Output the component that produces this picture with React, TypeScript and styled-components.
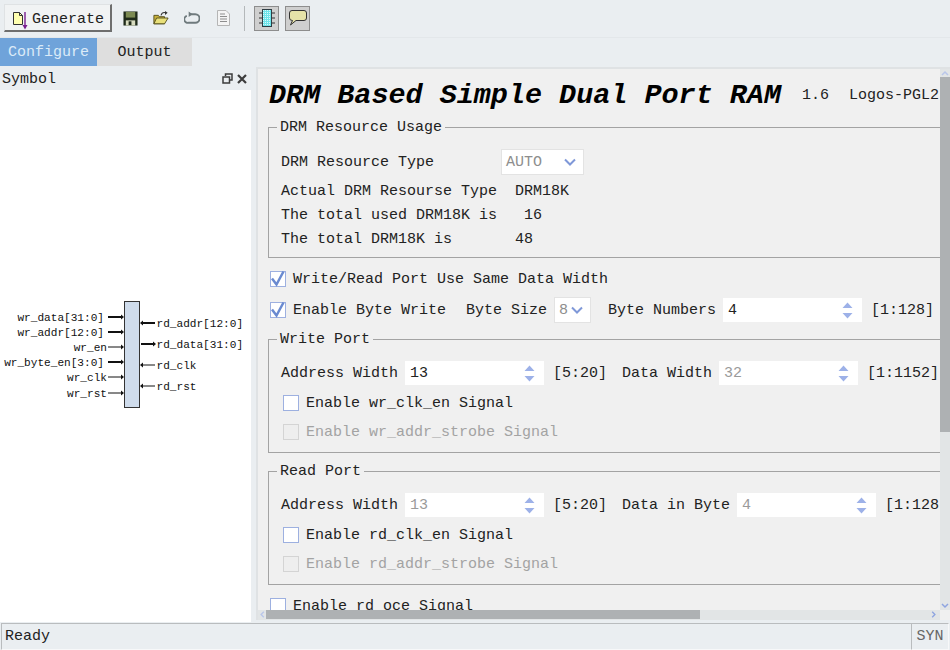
import React from "react";
import styled, { createGlobalStyle } from "styled-components";

const Global = createGlobalStyle`
  html, body { margin: 0; padding: 0; height: 100%; overflow: hidden; }
  body { background: #eaeef1; font-family: "Liberation Mono", "Courier New", monospace; font-size: 15px; color: #222; }
  * { box-sizing: border-box; }
`;

const Page = styled.div`
  width: 950px;
  height: 650px;
  display: flex;
  flex-direction: column;
  overflow: hidden;
`;

const Toolbar = styled.div`
  height: 38px;
  flex: none;
  display: flex;
  align-items: center;
  padding: 0 0 1px 4px;
  border-bottom: 1px solid #e3e7ea;
`;

const GenerateButton = styled.button`
  width: 108px;
  height: 28px;
  margin-right: 10px;
  padding: 3px 0 0 8px;
  display: flex;
  align-items: center;
  gap: 4px;
  font: 15px "Liberation Mono", monospace;
  color: #222;
  background: #f1f3f4;
  border: 1px solid #dfe2e4;
  border-right: 2px solid #6e6e6e;
  border-bottom: 2px solid #6e6e6e;
`;

const ToolIcon = styled.span<{ $gap?: number }>`
  width: 16px;
  height: 20px;
  margin-right: ${(p) => p.$gap ?? 15}px;
  display: flex;
  align-items: center;
  justify-content: center;
`;

const ToolDivider = styled.span`
  width: 1px;
  height: 25px;
  background: #b4b8ba;
  margin: 0 9px 0 1px;
`;

const Toggle = styled.span`
  width: 25px;
  height: 25px;
  margin-right: 6px;
  display: flex;
  align-items: center;
  justify-content: center;
  background: #cfcfcf;
  border: 1px solid #8d8d8d;
`;

const TabBar = styled.div`
  height: 28px;
  flex: none;
  display: flex;
`;

const Tab = styled.div<{ $active?: boolean }>`
  width: ${(p) => (p.$active ? 97 : 95)}px;
  display: flex;
  align-items: center;
  justify-content: center;
  background: ${(p) => (p.$active ? "#6fa3da" : "#dedede")};
  color: ${(p) => (p.$active ? "#dcebf8" : "#222")};
`;

const Main = styled.div`
  height: 556px;
  flex: none;
  display: flex;
  gap: 5px;
  padding-top: 1px;
`;

const SymbolPanel = styled.aside`
  width: 251px;
  flex: none;
  display: flex;
  flex-direction: column;
`;

const SymbolHeader = styled.div`
  height: 23px;
  flex: none;
  padding: 2px 4px 0 2px;
  display: flex;
  align-items: center;
  justify-content: space-between;
`;

const HeaderIcons = styled.span`
  display: flex;
  gap: 4px;
  align-items: center;
  margin-top: -2px;
`;

const SymbolCanvas = styled.div`
  flex: 1;
  background: #fff;
`;

const DiagramSvg = styled.svg`
  display: block;
`;

const ConfigPane = styled.section`
  flex: 1;
  min-width: 0;
  height: 553px;
  background: #f0f0f0;
  border: 1px solid #dfe2e4;
  border-width: 2px 0 0 2px;
  display: grid;
  grid-template-columns: 1fr 10px;
  grid-template-rows: 1fr 10px;
`;

const Viewport = styled.div`
  overflow: hidden;
  min-width: 0;
  min-height: 0;
`;

const Sheet = styled.div`
  width: 690px;
  padding: 0 0 0 10px;
`;

const TitleRow = styled.div`
  height: 51px;
  display: flex;
  align-items: center;
  white-space: pre;
  padding: 2px 0 0 1px;
`;

const Title = styled.h1`
  margin: 0;
  font: italic bold 28.45px "Liberation Mono", monospace;
  color: #000;
`;

const TitleNote = styled.span<{ $gap: number }>`
  font-size: 15px;
  margin-left: ${(p) => p.$gap}px;
`;

const Group = styled.fieldset<{ $height: number; $after?: number }>`
  margin: 0 0 ${(p) => p.$after ?? 11}px;
  padding: 0 0 0 12px;
  min-width: 0;
  height: ${(p) => p.$height}px;
  width: 672px;
  border: 1px solid #a3a3a3;
  border-right: 0;
`;

const Legend = styled.legend`
  padding: 0 3px;
  margin-left: -4px;
  height: 15px;
  line-height: 15px;
`;

const Row = styled.div<{ $height?: number; $top?: number; $after?: number }>`
  height: ${(p) => p.$height ?? 24}px;
  margin-top: ${(p) => p.$top ?? 0}px;
  margin-bottom: ${(p) => p.$after ?? 0}px;
  display: flex;
  align-items: center;
  white-space: pre;
  width: 720px;
`;

const CheckRow = styled(Row)`
  padding-left: 2px;
  gap: 7px;
`;

const Text = styled.span<{ $w?: number; $muted?: boolean; $left?: number }>`
  flex: none;
  width: ${(p) => (p.$w ? `${p.$w}px` : "auto")};
  margin-left: ${(p) => p.$left ?? 0}px;
  color: ${(p) => (p.$muted ? "#a3a3a3" : "#222")};
`;

const Box = styled.span<{ $disabled?: boolean }>`
  flex: none;
  width: 16px;
  height: 16px;
  display: flex;
  align-items: center;
  justify-content: center;
  background: ${(p) => (p.$disabled ? "#eeeeee" : "#fff")};
  border: 1px solid ${(p) => (p.$disabled ? "#d4d4d4" : "#9db0e0")};
`;

const Combo = styled.span<{ $w: number; $h: number }>`
  flex: none;
  width: ${(p) => p.$w}px;
  height: ${(p) => p.$h}px;
  display: flex;
  align-items: center;
  justify-content: space-between;
  padding: 0 7px 0 4px;
  background: #fff;
  border: 1px solid #e3e3e3;
  color: #8e8e8e;
`;

const Spin = styled.span<{ $disabled?: boolean; $after?: number }>`
  flex: none;
  width: 139px;
  height: 24px;
  margin: 0 ${(p) => p.$after ?? 9}px 0 0;
  padding: 0 9px 0 5px;
  display: flex;
  align-items: center;
  justify-content: space-between;
  background: #fff;
  color: ${(p) => (p.$disabled ? "#9a9a9a" : "#222")};
`;

const VBar = styled.div`
  background: #e2e5e6;
  display: flex;
  flex-direction: column;
  align-items: center;
`;

const VThumb = styled.div`
  width: 100%;
  height: 355px;
  margin-bottom: auto;
  background: #aeb1b3;
`;

const HBar = styled.div`
  background: #e2e5e6;
  display: flex;
  align-items: flex-start;
  padding: 0 2px 0 0;
`;

const HThumb = styled.div`
  width: 434px;
  height: 9px;
  margin-right: auto;
  background: #aeb1b3;
`;

const Corner = styled.div`
  background: #f0f0f0;
`;

const Status = styled.footer`
  height: 28px;
  flex: none;
  margin-top: 1px;
  display: flex;
  align-items: stretch;
  padding: 0 1px 1px 1px;
`;

const StatusText = styled.div`
  flex: 1;
  display: flex;
  align-items: center;
  padding-left: 3px;
  border: 1px solid #b9bcbe;
  border-right: 0;
  border-bottom-color: #f7f8f9;
`;

const StatusSyn = styled.div`
  width: 38px;
  display: flex;
  align-items: center;
  justify-content: center;
  color: #666;
  border: 1px solid #b9bcbe;
  border-bottom-color: #f7f8f9;
  border-right-color: #f7f8f9;
`;

const CheckSvg = styled.svg`
  overflow: visible;
`;

const Check = () => (
  <CheckSvg width="18" height="18" viewBox="0 0 18 18">
    <path d="M3 8.5 L7.5 14.5 L14.5 1.5" fill="none" stroke="#6a8ad0" strokeWidth="2.5" />
  </CheckSvg>
);

const Chevron = ({ color = "#7f98d8" }: { color?: string }) => (
  <svg width="12" height="8" viewBox="0 0 12 8">
    <path d="M1 1.5 L6 6.5 L11 1.5" fill="none" stroke={color} strokeWidth="2" />
  </svg>
);

const SpinArrows = () => (
  <svg width="11" height="17" viewBox="0 0 11 17">
    <path d="M5.5 0.5 L10.5 6 H0.5 Z M0.5 11 H10.5 L5.5 16.5 Z" fill="#9db1e8" />
  </svg>
);

const GenerateIcon = () => (
  <svg width="15" height="22" viewBox="0 0 15 22">
    <path d="M0.5 4.5 H6.5 L9.5 7.5 V16.5 H0.5 Z" fill="#ffffb0" stroke="#333" />
    <path d="M6.5 4.5 V7.5 H9.5" fill="none" stroke="#333" />
    <path d="M12 4 V20" stroke="#7a1f8f" strokeWidth="1.4" />
    <path d="M9.5 17 L12 21.5 L14.5 17 Z" fill="#7a1f8f" />
  </svg>
);

const SaveIcon = () => (
  <svg width="15" height="15" viewBox="0 0 16 16">
    <rect x="0.5" y="0.5" width="15" height="15" fill="#1f2a1a" />
    <rect x="3" y="1" width="10" height="6" fill="#7c8a52" />
    <rect x="3" y="10" width="10" height="5.5" fill="#d8dcc0" />
    <rect x="6" y="11" width="3" height="4" fill="#1f2a1a" />
  </svg>
);

const OpenIcon = () => (
  <svg width="17" height="16" viewBox="0 0 18 16">
    <path d="M1 5 H6 L7 6.5 H13 V14.5 H1 Z" fill="#c9b23c" stroke="#4f4a1a" />
    <path d="M1 14.5 L4 8 H17 L13 14.5 Z" fill="#e9e07a" stroke="#4f4a1a" />
    <path d="M9 5 C10 2 12 1.5 14 2" fill="none" stroke="#333" strokeWidth="1.2" />
    <path d="M13.5 0 L16.5 2 L13.5 4.5 Z" fill="#333" />
  </svg>
);

const ReloadIcon = () => (
  <svg width="17" height="14" viewBox="0 0 17 14">
    <path d="M6 3 H12 A3.7 3.7 0 0 1 12 12 H5 A3.7 3.7 0 0 1 3 4.8" fill="none" stroke="#6f7a7d" strokeWidth="2" />
    <path d="M5 0 L9 3 L5 6 Z" fill="#6f7a7d" />
  </svg>
);

const DocIcon = () => (
  <svg width="13" height="16" viewBox="0 0 13 16">
    <path d="M0.5 0.5 H9 L12.5 4 V15.5 H0.5 Z" fill="#f4f4f4" stroke="#b5b5b5" />
    <path d="M3 4 H8 M3 6.5 H10 M3 9 H10 M3 11.5 H10" stroke="#8e8e8e" />
  </svg>
);

const ChipIcon = () => (
  <svg width="20" height="20" viewBox="0 0 20 20">
    <defs>
      <pattern id="hatch" width="2" height="2" patternUnits="userSpaceOnUse">
        <rect width="2" height="2" fill="#6fe4ea" />
        <rect width="1" height="1" fill="#d6fbfc" />
      </pattern>
    </defs>
    <rect x="5.5" y="1.5" width="9" height="17" fill="url(#hatch)" stroke="#2f3d44" />
    <path d="M2 5 H5 M2 10 H5 M2 15 H5 M15 5 H18 M15 10 H18 M15 15 H18" stroke="#333" />
  </svg>
);

const BubbleIcon = () => (
  <svg width="20" height="20" viewBox="0 0 20 20">
    <path
      d="M4 2.5 H16 Q18.5 2.5 18.5 5 V10 Q18.5 12.5 16 12.5 H8 L2.5 17 L4.5 12.5 Q1.5 12.5 1.5 10 V5 Q1.5 2.5 4 2.5 Z"
      fill="#e6e3a8"
      stroke="#333"
    />
  </svg>
);

const FloatIcon = () => (
  <svg width="11" height="11" viewBox="0 0 11 11">
    <path d="M3.5 3 V1 H10 V7 H8 M1 4 H7.5 V10 H1 Z" fill="none" stroke="#3c3c3c" strokeWidth="1.5" />
  </svg>
);

const CloseIcon = () => (
  <svg width="10" height="10" viewBox="0 0 10 10">
    <path d="M1 1 L9 9 M9 1 L1 9" stroke="#3c3c3c" strokeWidth="2.2" />
  </svg>
);

const inputs = [
  { name: "wr_data[31:0]", y: 227, bus: true, x: 104 },
  { name: "wr_addr[12:0]", y: 242, bus: true, x: 104 },
  { name: "wr_en", y: 257, bus: false, x: 107 },
  { name: "wr_byte_en[3:0]", y: 272, bus: true, x: 104 },
  { name: "wr_clk", y: 287, bus: false, x: 107 },
  { name: "wr_rst", y: 303, bus: false, x: 107 },
];

const outputs = [
  { name: "rd_addr[12:0]", y: 233, bus: true, out: false },
  { name: "rd_data[31:0]", y: 254, bus: true, out: true },
  { name: "rd_clk", y: 275, bus: false, out: false },
  { name: "rd_rst", y: 296, bus: false, out: false },
];

const SymbolLabel = styled.text`
  font: 11.1px "Liberation Mono", monospace;
  fill: #111;
`;

const SymbolDiagram = () => (
  <DiagramSvg width="251" height="320" viewBox="0 0 251 320">
    <rect x="124.5" y="211.5" width="15" height="106" fill="#cfdcec" stroke="#333" />
    {inputs.map((p) => (
      <g key={p.name}>
        <SymbolLabel x={p.x} y={p.y + 3.5} textAnchor="end">
          {p.name}
        </SymbolLabel>
        <path d={`M108 ${p.y} H122`} stroke="#111" strokeWidth={p.bus ? 2 : 1} />
        <path d={`M121 ${p.y - 2.5} L124 ${p.y} L121 ${p.y + 2.5} Z`} fill="#111" />
      </g>
    ))}
    {outputs.map((p) => (
      <g key={p.name}>
        <SymbolLabel x="156.5" y={p.y + 3.5}>
          {p.name}
        </SymbolLabel>
        <path d={`M141 ${p.y} H155`} stroke="#111" strokeWidth={p.bus ? 2 : 1} />
        {p.out ? (
          <path d={`M153 ${p.y - 2.5} L156 ${p.y} L153 ${p.y + 2.5} Z`} fill="#111" />
        ) : (
          <path d={`M143 ${p.y - 2.5} L140 ${p.y} L143 ${p.y + 2.5} Z`} fill="#111" />
        )}
      </g>
    ))}
  </DiagramSvg>
);

export default function App() {
  return (
    <Page>
      <Global />
      <Toolbar>
        <GenerateButton>
          <GenerateIcon />
          Generate
        </GenerateButton>
        <ToolIcon>
          <SaveIcon />
        </ToolIcon>
        <ToolIcon>
          <OpenIcon />
        </ToolIcon>
        <ToolIcon>
          <ReloadIcon />
        </ToolIcon>
        <ToolIcon $gap={12}>
          <DocIcon />
        </ToolIcon>
        <ToolDivider />
        <Toggle>
          <ChipIcon />
        </Toggle>
        <Toggle>
          <BubbleIcon />
        </Toggle>
      </Toolbar>
      <TabBar>
        <Tab $active>Configure</Tab>
        <Tab>Output</Tab>
      </TabBar>
      <Main>
        <SymbolPanel>
          <SymbolHeader>
            Symbol
            <HeaderIcons>
              <FloatIcon />
              <CloseIcon />
            </HeaderIcons>
          </SymbolHeader>
          <SymbolCanvas>
            <SymbolDiagram />
          </SymbolCanvas>
        </SymbolPanel>
        <ConfigPane>
          <Viewport>
            <Sheet>
              <TitleRow>
                <Title>DRM Based Simple Dual Port RAM</Title>
                <TitleNote $gap={21}>1.6</TitleNote>
                <TitleNote $gap={20}>Logos-PGL2</TitleNote>
              </TitleRow>
              <Group $height={138}>
                <Legend>DRM Resource Usage</Legend>
                <Row $height={26} $top={14}>
                  <Text $w={220}>DRM Resource Type</Text>
                  <Combo $w={83} $h={26}>
                    AUTO
                    <Chevron />
                  </Combo>
                </Row>
                <Row $top={4}>Actual DRM Resourse Type  DRM18K</Row>
                <Row>The total used DRM18K is   16</Row>
                <Row>The total DRM18K is       48</Row>
              </Group>
              <CheckRow $height={20}>
                <Box>
                  <Check />
                </Box>
                <Text>Write/Read Port Use Same Data Width</Text>
              </CheckRow>
              <CheckRow $height={26} $top={8} $after={9}>
                <Box>
                  <Check />
                </Box>
                <Text $w={166}>Enable Byte Write</Text>
                <Text $w={81}>Byte Size</Text>
                <Combo $w={37} $h={26}>
                  8
                  <Chevron />
                </Combo>
                <Text $w={108} $left={10}>
                  Byte Numbers
                </Text>
                <Spin $after={2}>
                  4
                  <SpinArrows />
                </Spin>
                [1:128]
              </CheckRow>
              <Group $height={121}>
                <Legend>Write Port</Legend>
                <Row $top={14}>
                  <Text $w={124}>Address Width</Text>
                  <Spin>
                    13
                    <SpinArrows />
                  </Spin>
                  <Text $w={69}>[5:20]</Text>
                  <Text $w={97}>Data Width</Text>
                  <Spin $disabled>
                    32
                    <SpinArrows />
                  </Spin>
                  [1:1152]
                </Row>
                <CheckRow $height={16} $top={10}>
                  <Box />
                  <Text>Enable wr_clk_en Signal</Text>
                </CheckRow>
                <CheckRow $height={16} $top={13}>
                  <Box $disabled />
                  <Text $muted>Enable wr_addr_strobe Signal</Text>
                </CheckRow>
              </Group>
              <Group $height={121}>
                <Legend>Read Port</Legend>
                <Row $top={14}>
                  <Text $w={124}>Address Width</Text>
                  <Spin $disabled>
                    13
                    <SpinArrows />
                  </Spin>
                  <Text $w={69}>[5:20]</Text>
                  <Text $w={115}>Data in Byte</Text>
                  <Spin $disabled>
                    4
                    <SpinArrows />
                  </Spin>
                  [1:128]
                </Row>
                <CheckRow $height={16} $top={10}>
                  <Box />
                  <Text>Enable rd_clk_en Signal</Text>
                </CheckRow>
                <CheckRow $height={16} $top={13}>
                  <Box $disabled />
                  <Text $muted>Enable rd_addr_strobe Signal</Text>
                </CheckRow>
              </Group>
              <CheckRow $height={20} $top={1}>
                <Box />
                <Text>Enable rd_oce Signal</Text>
              </CheckRow>
            </Sheet>
          </Viewport>
          <VBar>
            <svg width="10" height="8" viewBox="0 0 10 8">
              <path d="M2 6 L5 3 L8 6" fill="none" stroke="#b9c6ea" strokeWidth="1.5" />
            </svg>
            <VThumb />
            <svg width="10" height="8" viewBox="0 0 10 8">
              <path d="M2 2 L5 5 L8 2" fill="none" stroke="#8ea4e0" strokeWidth="1.5" />
            </svg>
          </VBar>
          <HBar>
            <svg width="8" height="9" viewBox="0 0 8 10">
              <path d="M6 2 L3 5 L6 8" fill="none" stroke="#b9c6ea" strokeWidth="1.5" />
            </svg>
            <HThumb />
            <svg width="8" height="9" viewBox="0 0 8 10">
              <path d="M2 2 L5 5 L2 8" fill="none" stroke="#8ea4e0" strokeWidth="1.5" />
            </svg>
          </HBar>
          <Corner />
        </ConfigPane>
      </Main>
      <Status>
        <StatusText>Ready</StatusText>
        <StatusSyn>SYN</StatusSyn>
      </Status>
    </Page>
  );
}
